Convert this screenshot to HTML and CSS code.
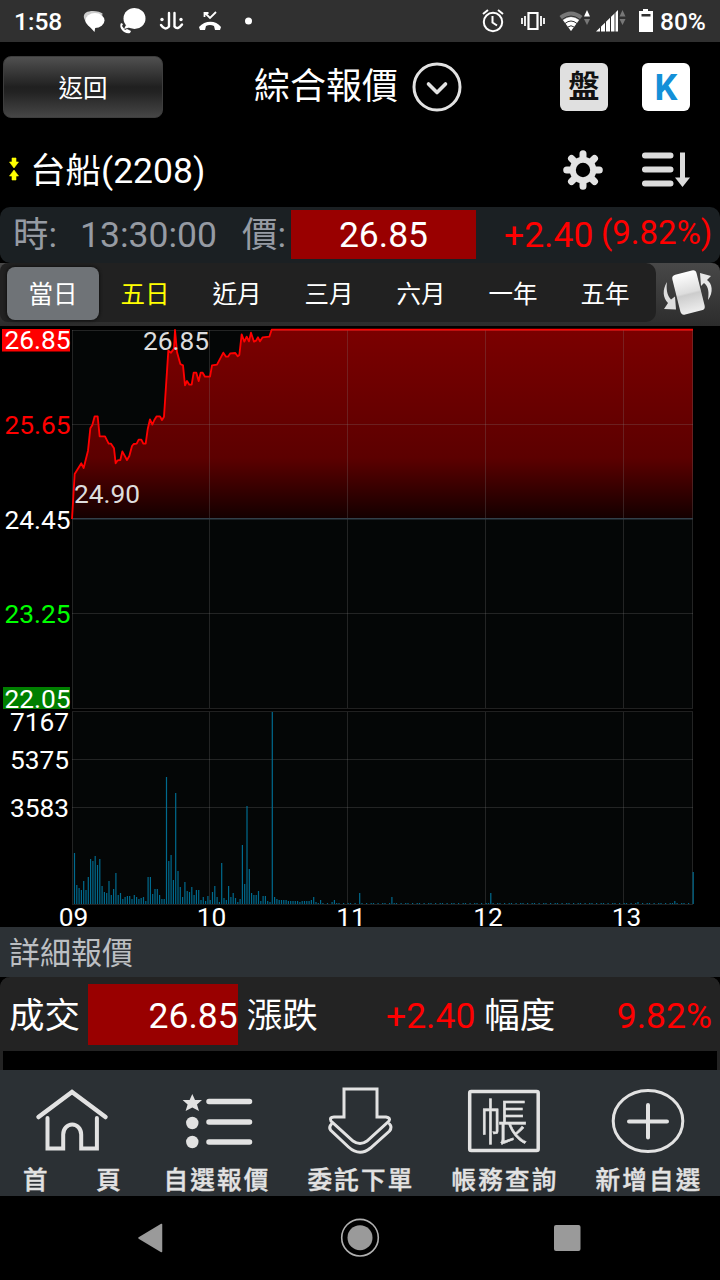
FILE: index.html
```
<!DOCTYPE html>
<html lang="zh-Hant">
<head>
	<meta charset="utf-8">
	<title>綜合報價</title>
	<link rel="stylesheet" href="styles.css">
</head>
<body>
	<!-- status bar -->
	<div class="status">
		<span class="clock">1:58</span>
		<svg class="status_left" width="180" height="42" viewBox="80 0 180 42" fill="#fff">
			<path d="M84 18c-2-9 15-8 19-4l-3 2c-7-3-13 0-14 7z" fill="#ccc"/>
			<ellipse cx="95" cy="20.500" rx="9.500" ry="7.500"/>
			<path d="M89 26l5.500 6 1-6z"/>
			<ellipse cx="134.500" cy="18.500" rx="11" ry="10.500"/>
			<path d="M126 25l-2 4 7-2z"/>
			<path d="M121 23c-3 5 4 12 9 10l1-2-4-2-2 1-3-4 1-2z"/>
			<g fill="none" stroke="#fff" stroke-width="2.400">
				<path d="M169 13v13.500M174.500 13v13.500q3 4 7.500-2M161 25q4 6 8 1.500" stroke-linecap="round"/>
			</g>
			<circle cx="162" cy="19.500" r="1.700"/><circle cx="181" cy="19.500" r="1.700"/>
			<path d="M199 27c6-7 17-7 22 0l-1 3h-5l-1-4q-4-2-8 0l-1 4h-5z"/>
			<path d="M204.500 17v-4h4M205 13l5 5 6-6" fill="none" stroke="#fff" stroke-width="1.800"/>
			<circle cx="248.500" cy="21" r="3.500"/>
		</svg>
		<svg class="status_right" width="180" height="42" viewBox="478 0 180 42" fill="#fff">
			<g fill="none" stroke="#fff" stroke-width="2">
				<circle cx="493" cy="22" r="9.200"/>
				<path d="M492.500 16v6.500l4.500 3M483 14l5-4M503 14l-5-4"/>
				<path d="M528.500 13h9v16h-9z" stroke-width="2.200"/>
				<path d="M525 16v10M522 18v6M541 16v10M544 18v6" stroke-width="1.800"/>
			</g>
			<path d="M559.500 16q11.500-9 23 0L571 31z" fill="#777"/>
			<path d="M563 20q8-6 16 0l-8 11z"/>
			<path d="M562 19.500q9-7 18 0M565 23.500q6-5 12 0M568 27q3-2.500 6 0" fill="none" stroke="#303030" stroke-width="1"/>
			<path d="M587 10l3 6.500h-6z"/><path d="M587 25l3-6h-6z" fill="#777"/>
			<path d="M596 31.500L618 10v21.500z"/>
			<path d="M600.500 25v7M605.500 20v12M610.500 16v16M615 12v20" stroke="#303030" stroke-width="1"/>
			<path d="M622.500 10l3 6.500h-6zM622.500 25l3-6h-6z" fill="#777"/>
			<path d="M643 9h5v2h5v21h-14V11h4zM641.500 14v2.500h9V14z" fill-rule="evenodd"/>
		</svg>
		<span class="battery">80%</span>
	</div>

	<!-- title -->
	<div class="header">
		<button type="button" class="back">返回</button>
		<div class="title">
			<span>綜合報價</span>
			<svg width="50" height="50" viewBox="0 0 50 50" fill="none" stroke="#e2e2e2">
				<circle cx="25" cy="25" r="23" stroke-width="3"/>
				<path d="M16.500 22l8.500 8.500 8.500-8.500" stroke-width="3.600" stroke-linecap="round" stroke-linejoin="round"/>
			</svg>
		</div>
		<div class="square">盤</div>
		<div class="square k">K</div>
	</div>

	<!-- stock name -->
	<div class="stock">
		<svg class="arrows" width="10" height="24" viewBox="0 0 10 24" fill="#ff0">
			<path d="M3 1h4v4h2.500L5 11 .5 5H3zM3 23h4v-4h2.500L5 13 .5 19H3z" stroke="#ff0" stroke-width=".6"/>
		</svg>
		<h1>台船(2208)</h1>
		<svg class="gear" width="40" height="40" viewBox="-20 -20 40 40">
			<g stroke="#e2e2e2" stroke-width="7" stroke-linecap="round">
				<path d="M0-16.300V16.300M-16.300 0H16.300M-11.500-11.500L11.500 11.500M11.500-11.500L-11.500 11.500"/>
			</g>
			<circle r="13.300" fill="#e2e2e2"/><circle r="7.200" fill="#000"/>
		</svg>
		<svg class="sort" width="50" height="38" viewBox="0 0 50 38" fill="none" stroke="#dcdcdc">
			<path d="M4 4.500h25.500M4 18.500h25.500M4 32.500h25.500" stroke-width="6" stroke-linecap="round"/>
			<path d="M41.500 1.500v26" stroke-width="5"/>
			<path d="M34 26.500h15l-7.500 9.500z" fill="#dcdcdc" stroke="none"/>
		</svg>
	</div>

	<!-- last quote -->
	<div class="quote">
		<span class="time_label">時:</span>
		<span class="time">13:30:00</span>
		<span class="price_label">價:</span>
		<span class="price">26.85</span>
		<span class="change">+2.40</span>
		<span class="percent">(9.82%)</span>
	</div>

	<div class="tabs">
		<ul>
			<li class="selected">當日</li>
			<li class="yellow">五日</li>
			<li>近月</li>
			<li>三月</li>
			<li>六月</li>
			<li>一年</li>
			<li>五年</li>
		</ul>
		<svg width="64" height="63" viewBox="656 263 64 63">
			<defs>
				<linearGradient id="phone" x1="0" y1="0" x2="0" y2="1">
					<stop offset="0" stop-color="#fff"/><stop offset=".5" stop-color="#ddd"/>
					<stop offset=".55" stop-color="#ccc"/><stop offset="1" stop-color="#eee"/>
				</linearGradient>
			</defs>
			<rect x="676" y="272" width="25" height="41" rx="4" fill="url(#phone)" transform="rotate(-14 688.500 292.500)"/>
			<path d="M667 282c-5 8-4 16 1 21l-4 6 12 .5-1-13-4 3c-4-4-5-11-4-17.500z" fill="#ddd"/>
			<path d="M708 300c6-8 4-17-1-20l4-4-11-3 1 13 3-3c5 4 5 10 4 17z" fill="#e8e8e8"/>
		</svg>
	</div>

	<!-- price + volume chart, 2.3px per minute -->
	<svg class="chart" width="720" height="601" viewBox="0 326 720 601">
		<defs>
			<linearGradient id="fill" gradientUnits="userSpaceOnUse" x1="0" y1="30" x2="0" y2="594">
				<stop offset="0" stop-color="#7b0000"/>
				<stop offset=".68" stop-color="#5c0000"/>
				<stop offset="1" stop-color="#140000"/>
			</linearGradient>
		</defs>
		<path d="M72 330h621v378H72zM72 712h621v192H72z" fill="#040606"/>
		<g transform="translate(0 320) scale(.33333)">
			<path id="area" fill="url(#fill)"/>
		</g>
		<g class="grid">
			<path d="M72.500 330v378M209.500 330v378M347.500 330v378M485.500 330v378M623.500 330v378M692.500 330v378"/>
			<path d="M72 330.500h621M72 424.500h621M72 613.500h621M72 708.500h621"/>
			<path d="M72.500 712v192M209.500 712v192M347.500 712v192M485.500 712v192M623.500 712v192M692.500 712v192"/>
			<path d="M72 711.500h621M72 759.500h621M72 807.500h621M72 904.500h621"/>
		</g>
		<path d="M72 518.700h621" stroke="#33404a" stroke-width="1.500"/>
		<g transform="translate(0 320) scale(.33333)">
			<path id="line" fill="none" stroke="#f00" stroke-width="5.500" stroke-linejoin="round"/>
		</g>
		<path id="volume" stroke="#006a8e" stroke-width="1.200"/>

		<path d="M2 329h68v22.500H2z" fill="#f00"/>
		<path d="M3 687h67v22H3z" fill="#007f00"/>
		<g class="axis" text-anchor="end">
			<text x="70.500" y="349">26.85</text>
			<text x="70.500" y="433.500" fill="#f00">25.65</text>
			<text x="70.500" y="528.500">24.45</text>
			<text x="70.500" y="622.500" fill="#0f0">23.25</text>
			<text x="70.500" y="707.500">22.05</text>
			<text x="69" y="730.500">7167</text>
			<text x="69" y="769">5375</text>
			<text x="69" y="816.500">3583</text>
		</g>
		<g class="axis" text-anchor="middle">
			<text x="73.500" y="925.500">09</text>
			<text x="211.500" y="925.500">10</text>
			<text x="351" y="925.500">11</text>
			<text x="488" y="925.500">12</text>
			<text x="626.500" y="925.500">13</text>
		</g>
		<g class="axis mark">
			<text x="143" y="349.500">26.85</text>
			<text x="74" y="502.500">24.90</text>
		</g>
	</svg>

	<h2 class="section">詳細報價</h2>
	<div class="detail">
		<div class="row">
			<span class="name">成交</span><span class="value box">26.85</span>
			<span class="name">漲跌</span><span class="value">+2.40</span>
			<span class="name">幅度</span><span class="value last">9.82%</span>
		</div>
	</div>

	<!-- bottom menu -->
	<ul class="menu">
		<li>
			<svg width="144" height="96" viewBox="0 1070 144 96">
				<path d="M38.500 1117L72 1092l33.500 25" stroke-width="4.500"/>
				<path d="M47.500 1118v30.500h15.700v-14a9 10 0 0 1 18 0v14h15.700V1118" stroke-width="4"/>
			</svg>
			<span class="wide"><i>首</i><i>頁</i></span>
		</li>
		<li>
			<svg width="144" height="96" viewBox="144 1070 144 96">
				<path d="M209 1101.500h40.500M209 1122h40.500M209 1142h40.500" stroke-width="5.500"/>
				<path d="M192.300 1094l2.700 6h7l-5 4.500 2 6.500-6.700-3.500-6.700 3.500 2-6.500-5-4.500h7z" fill="#e2e2e2" stroke="none"/>
				<circle cx="192.300" cy="1123" r="6.200" fill="#e2e2e2" stroke="none"/>
				<circle cx="192.300" cy="1142" r="6.200" fill="#e2e2e2" stroke="none"/>
			</svg>
			<span>自選報價</span>
		</li>
		<li>
			<svg width="144" height="96" viewBox="288 1070 144 96">
				<path d="M344 1089h33v28h9q5 1 3 4l-22 20q-7 5-14 0l-22-20q-2-4 3-4h10z" stroke-width="3"/>
				<path d="M331.500 1124q-3 3-1 6l18 17q11 10 22 1l19-17q3-4 0-7" stroke-width="3"/>
			</svg>
			<span>委託下單</span>
		</li>
		<li>
			<svg width="144" height="96" viewBox="432 1070 144 96">
				<rect x="469.700" y="1091.500" width="68.500" height="59" rx="1.500" stroke-width="3.500"/>
				<text class="glyph" x="504" y="1140" text-anchor="middle">帳</text>
			</svg>
			<span>帳務查詢</span>
		</li>
		<li>
			<svg width="144" height="96" viewBox="576 1070 144 96">
				<ellipse cx="648" cy="1121" rx="34.800" ry="30.500" stroke-width="3"/>
				<path d="M629 1121.500h38M648 1105v32.500" stroke-width="4"/>
			</svg>
			<span>新增自選</span>
		</li>
	</ul>

	<svg class="system" width="720" height="84" viewBox="0 1196 720 84" fill="#9a9a9a">
		<path d="M139 1238l22.500-13.500v27z" stroke="#9a9a9a" stroke-width="1.500" stroke-linejoin="round"/>
		<circle cx="360" cy="1237.700" r="12.500"/>
		<circle cx="360" cy="1237.700" r="18.300" fill="none" stroke="#b0b0b0" stroke-width="1.600"/>
		<rect x="554" y="1225" width="26.500" height="26" rx="2"/>
	</svg>

	<script src="chart.js"></script>
</body>
</html>
```
FILE: chart.js
```
var price = "216,597 224,462 244,430 251,444 264,392 271,325 277,315 284,289 293,289 299,349 315,349 " +
	"326,371 333,371 342,385 347,430 353,421 361,420 367,394 381,420 388,408 396,378 401,372 410,371 " +
	"416,359 424,359 430,371 437,371 443,328 450,298 457,314 463,300 470,289 480,289 486,300 492,290 " +
	"505,92 513,98 522,86 525,30 531,96 541,132 549,136 555,196 561,183 568,194 575,194 581,158 " +
	"589,158 596,183 602,158 608,158 615,170 630,170 636,136 651,134 670,98 678,110 684,110 691,100 " +
	"706,99 713,109 718,105 725,43 733,65 740,50 747,64 753,38 762,65 768,62 774,52 780,64 788,52 " +
	"808,50 815,29 2079,29";
document.getElementById("line").setAttribute("d", "M" + price);
document.getElementById("area").setAttribute("d", "M" + price + " 2079,594 216,594z");

// one value per minute from 09:01
var vol = [51,19,16,14,23,14,27,45,43,48,39,45,18,12,11,23,9,15,31,9,11,5,7,8,8,5,9,7,5,6,7,3,27,27,10,
	15,15,9,5,5,127,43,49,24,111,33,17,7,22,13,12,17,9,14,14,4,7,3,8,4,12,18,7,2,41,6,4,18,7,11,6,2,5,
	59,20,98,35,11,9,9,13,3,8,8,3,2,192,7,5,4,4,4,4,3,3,3,3,3,2,3,3,3,3,4,7,2,1,4,1,0,1,0,2,4,1];
var late = {125: 11, 139: 7, 182: 11, 246: 2, 262: 3, 270: 32};
var d = "";
for (var i = 1; i <= 270; i++) {
	var h = vol[i - 1];
	if (h === undefined) {
		h = late[i] || ((i * 7) % 5 < 3 ? 1 : 0);
	}
	if (h > 0) {
		d += "M" + (72.2 + i * 2.3).toFixed(1) + " 904v-" + h;
	}
}
document.getElementById("volume").setAttribute("d", d);
```
FILE: styles.css
```
* {
	box-sizing: border-box;
}
body {
	margin: 0;
	width: 720px;
	height: 1280px;
	overflow: hidden;
	background: #000;
	color: #fff;
	font-family: Roboto, "Noto Sans CJK TC", sans-serif;
}
svg {
	display: block;
	flex: none;
}
ul {
	list-style: none;
	margin: 0;
	padding: 0;
}

/* status bar */
.status {
	display: flex;
	height: 42px;
	line-height: 43px;
	background: #303030;
	font-size: 24.5px;
	font-weight: 500;
}
.clock {
	width: 80px;
	padding-left: 14px;
}
.status_right {
	margin-left: 218px;
}
.battery {
	padding-left: 2px;
}

/* title */
.header {
	display: flex;
	align-items: center;
	height: 90px;
	padding-left: 3px;
}
.back {
	flex: none;
	width: 160px;
	height: 62px;
	padding: 0 0 2px;
	border: 1px solid #3d3d3d;
	border-radius: 8px;
	background: linear-gradient(#505050, #202020 50%, #222 58%, #464646);
	color: #fff;
	font-family: inherit;
	font-size: 24.5px;
}
.title {
	display: flex;
	flex: none;
	align-items: center;
	width: 307px;
	padding-left: 91px;
	font-size: 36px;
	line-height: 60px;
	white-space: nowrap;
}
.title svg {
	margin-left: 14px;
}
.square {
	flex: none;
	width: 48px;
	height: 48px;
	margin-left: 90px;
	border-radius: 6px;
	background: #e0e0e0;
	color: #111;
	font-size: 31px;
	font-weight: 700;
	line-height: 47px;
	text-align: center;
}
.square.k {
	margin-left: 34px;
	background: #fff;
	color: #1490d8;
	font-size: 36px;
	line-height: 50px;
}

/* stock name */
.stock {
	display: flex;
	align-items: center;
	height: 75px;
	padding-left: 9px;
}
.stock h1 {
	width: 543px;
	margin: 0;
	padding: 3px 0 0 11px;
	font-size: 35.5px;
	font-weight: 400;
	line-height: 72px;
}
.gear {
	margin-left: 1px;
}
.arrows {
	margin-top: -2px;
}
.sort {
	margin-left: 38px;
}

/* last quote */
.quote {
	display: flex;
	height: 56px;
	padding: 3px 0 4px 13px;
	border-radius: 10px;
	background: #1b2023;
	color: #969ba3;
	font-size: 35.5px;
	line-height: 51px;
	white-space: nowrap;
}
.time_label {
	width: 67px;
}
.time {
	width: 162px;
}
.price_label {
	width: 49px;
}
.price {
	width: 185px;
	background: #900;
	color: #fff;
	text-align: center;
}
.change {
	width: 125px;
	padding-left: 28px;
	color: #f00;
}
.percent {
	color: #f00;
	font-size: 33px;
	line-height: 46px;
}

/* period tabs */
.tabs {
	display: flex;
	height: 63px;
	border-radius: 0 8px 0 0;
	background: linear-gradient(#484848, #2c2c2c);
}
.tabs ul {
	display: flex;
	width: 656px;
	height: 59px;
	padding: 4px 0 3px 7px;
	border-radius: 8px 10px 10px 8px;
	background: #212121;
}
.tabs li {
	width: 92px;
	height: 53px;
	border-radius: 8px;
	font-size: 24.5px;
	line-height: 55px;
	text-align: center;
}
.tabs .selected {
	background: #6f7377;
	box-shadow: 0 0 3px 1px #111;
}
.tabs .yellow {
	color: #ff0;
}

/* chart */
.grid {
	fill: none;
	stroke: #808080;
	stroke-opacity: .25;
}
.axis {
	fill: #fff;
	font-size: 26.3px;
}
.mark {
	fill: #ddd;
}

/* detail */
.section {
	height: 50px;
	margin: 0;
	padding-left: 9px;
	background: #2c3135;
	color: #bcbfc2;
	font-size: 31px;
	font-weight: 400;
	line-height: 53px;
}
.detail {
	height: 93px;
	border: solid #232323;
	border-width: 0 3px;
	border-radius: 10px 10px 0 0;
	background: #000;
}
.row {
	display: flex;
	height: 74px;
	margin: 0 -3px;
	padding: 7px 8px 6px 9px;
	border-radius: 10px 10px 0 0;
	background: #232323;
	font-size: 35.5px;
	line-height: 64px;
}
.name {
	width: 79px;
}
.value {
	width: 150px;
	margin-right: 9px;
	color: #f00;
	text-align: right;
}
.box {
	background: #900;
	color: #fff;
}
.last {
	width: 149px;
	margin-right: 0;
}

/* bottom menu */
.menu {
	display: flex;
	height: 126px;
	background: #2b3034;
}
.menu li {
	width: 144px;
	color: #e2e2e2;
	font-size: 24.5px;
	font-weight: 500;
	letter-spacing: 2.3px;
	line-height: 30px;
	text-align: center;
}
.menu li > span {
	display: block;
	padding-left: 2px;
	-webkit-text-stroke: .4px #e2e2e2;
}
.menu .wide {
	display: flex;
	justify-content: space-between;
	padding: 0 21px 0 23px;
}
.menu i {
	font-style: normal;
}
.menu svg {
	fill: none;
	stroke: #e2e2e2;
	stroke-linecap: round;
}
.menu .glyph {
	fill: #e2e2e2;
	stroke: #e2e2e2;
	stroke-width: .5;
	font-size: 49px;
	font-weight: 300;
	letter-spacing: 0;
}
```
